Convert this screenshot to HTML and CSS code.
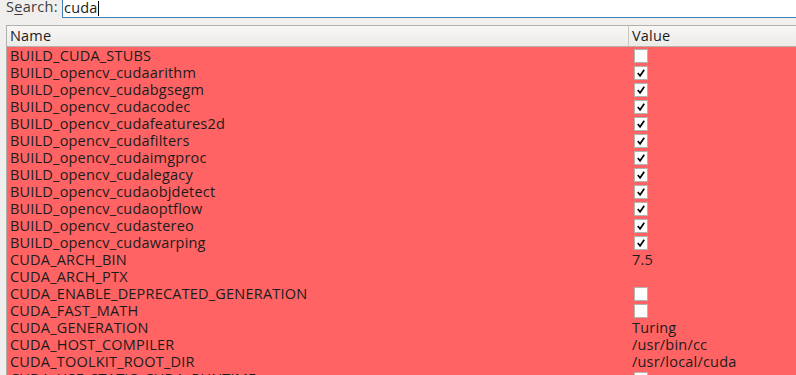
FILE: index.html
```html
<!DOCTYPE html>
<html>
<head>
<meta charset="utf-8">
<link rel="stylesheet" href="styles.css">
</head>
<body>
<div class="search">
  <span class="label">S<u>e</u>arch:</span>
  <div class="input"><span>cuda</span><span class="caret"></span></div>
</div>
<div class="table">
  <div class="head">
    <div class="c-name">Name</div>
    <div class="c-val">Value</div>
  </div>
  <div class="rows">
    <div class="row"><div class="c-name">BUILD_CUDA_STUBS</div><div class="c-val"><span class="cb"></span></div></div>
    <div class="row"><div class="c-name">BUILD_opencv_cudaarithm</div><div class="c-val"><span class="cb on"><svg viewBox="0 0 13 13"><path d="M3 6.5 L5.5 9.5 L10 3"/></svg></span></div></div>
    <div class="row"><div class="c-name">BUILD_opencv_cudabgsegm</div><div class="c-val"><span class="cb on"><svg viewBox="0 0 13 13"><path d="M3 6.5 L5.5 9.5 L10 3"/></svg></span></div></div>
    <div class="row"><div class="c-name">BUILD_opencv_cudacodec</div><div class="c-val"><span class="cb on"><svg viewBox="0 0 13 13"><path d="M3 6.5 L5.5 9.5 L10 3"/></svg></span></div></div>
    <div class="row"><div class="c-name">BUILD_opencv_cudafeatures2d</div><div class="c-val"><span class="cb on"><svg viewBox="0 0 13 13"><path d="M3 6.5 L5.5 9.5 L10 3"/></svg></span></div></div>
    <div class="row"><div class="c-name">BUILD_opencv_cudafilters</div><div class="c-val"><span class="cb on"><svg viewBox="0 0 13 13"><path d="M3 6.5 L5.5 9.5 L10 3"/></svg></span></div></div>
    <div class="row"><div class="c-name">BUILD_opencv_cudaimgproc</div><div class="c-val"><span class="cb on"><svg viewBox="0 0 13 13"><path d="M3 6.5 L5.5 9.5 L10 3"/></svg></span></div></div>
    <div class="row"><div class="c-name">BUILD_opencv_cudalegacy</div><div class="c-val"><span class="cb on"><svg viewBox="0 0 13 13"><path d="M3 6.5 L5.5 9.5 L10 3"/></svg></span></div></div>
    <div class="row"><div class="c-name">BUILD_opencv_cudaobjdetect</div><div class="c-val"><span class="cb on"><svg viewBox="0 0 13 13"><path d="M3 6.5 L5.5 9.5 L10 3"/></svg></span></div></div>
    <div class="row"><div class="c-name">BUILD_opencv_cudaoptflow</div><div class="c-val"><span class="cb on"><svg viewBox="0 0 13 13"><path d="M3 6.5 L5.5 9.5 L10 3"/></svg></span></div></div>
    <div class="row"><div class="c-name">BUILD_opencv_cudastereo</div><div class="c-val"><span class="cb on"><svg viewBox="0 0 13 13"><path d="M3 6.5 L5.5 9.5 L10 3"/></svg></span></div></div>
    <div class="row"><div class="c-name">BUILD_opencv_cudawarping</div><div class="c-val"><span class="cb on"><svg viewBox="0 0 13 13"><path d="M3 6.5 L5.5 9.5 L10 3"/></svg></span></div></div>
    <div class="row"><div class="c-name">CUDA_ARCH_BIN</div><div class="c-val">7.5</div></div>
    <div class="row"><div class="c-name">CUDA_ARCH_PTX</div><div class="c-val"></div></div>
    <div class="row"><div class="c-name">CUDA_ENABLE_DEPRECATED_GENERATION</div><div class="c-val"><span class="cb"></span></div></div>
    <div class="row"><div class="c-name">CUDA_FAST_MATH</div><div class="c-val"><span class="cb"></span></div></div>
    <div class="row"><div class="c-name">CUDA_GENERATION</div><div class="c-val">Turing</div></div>
    <div class="row"><div class="c-name">CUDA_HOST_COMPILER</div><div class="c-val">/usr/bin/cc</div></div>
    <div class="row"><div class="c-name">CUDA_TOOLKIT_ROOT_DIR</div><div class="c-val">/usr/local/cuda</div></div>
    <div class="row"><div class="c-name">CUDA_USE_STATIC_CUDA_RUNTIME</div><div class="c-val"><span class="cb on"><svg viewBox="0 0 13 13"><path d="M3 6.5 L5.5 9.5 L10 3"/></svg></span></div></div>
  </div>
</div>
</body>
</html>
```
FILE: styles.css
```css
html, body {
  margin: 0;
  padding: 0;
  height: 375px;
  overflow: hidden;
}
body {
  background: #f0efed;
  font-family: "Open Sans", sans-serif;
  font-size: 14.5px;
  letter-spacing: 0.2px;
  color: #1c1c1c;
}
.search {
  display: flex;
  height: 18px;
  align-items: flex-start;
}
.label {
  padding-left: 6px;
  width: 50px;
  line-height: 14px;
  color: #3c3c3c;
  letter-spacing: 0.3px;
}
.label u {
  text-decoration-thickness: 1px;
  text-underline-offset: 2px;
}
.input {
  flex: 1;
  margin-left: 6px;
  margin-top: -4px;
  height: 22px;
  background: #fff;
  border: 1px solid #3d7fb6;
  border-right: none;
  display: flex;
  align-items: center;
  padding: 2px 0 0 1px;
  box-sizing: border-box;
  line-height: 16px;
}
.caret {
  display: inline-block;
  width: 1px;
  height: 15px;
  background: #000;
}
.table {
  margin-top: 7px;
  margin-left: 6px;
  border-left: 1px solid #b3b0ab;
  border-top: 1px solid #b3b0ab;
  background: #fff;
}
.head {
  display: flex;
  height: 20px;
  line-height: 20px;
  border-bottom: 1px solid #b6b3ae;
  background: linear-gradient(#f8f7f5, #ecebe8);
  align-items: center;
}
.head .c-val {
  border-left: 1px solid #c9c6c1;
  height: 20px;
  display: flex;
  align-items: center;
}
.c-name {
  width: 618px;
  padding-left: 3px;
  white-space: nowrap;
}
.c-val {
  padding-left: 3px;
  flex: 1;
  white-space: nowrap;
}
.row {
  display: flex;
  height: 17px;
  line-height: 17px;
  background: #ff6363;
  align-items: center;
}
.row .c-val {
  padding-left: 4px;
  display: flex;
  align-items: center;
}
.cb {
  display: block;
  width: 12px;
  height: 12px;
  background: #fff;
  border: 1px solid #b5b3b0;
  margin-left: 2px;
}
.cb svg {
  display: block;
  width: 12px;
  height: 12px;
}
.cb svg path {
  fill: none;
  stroke: #000;
  stroke-width: 1.8;
}
```
